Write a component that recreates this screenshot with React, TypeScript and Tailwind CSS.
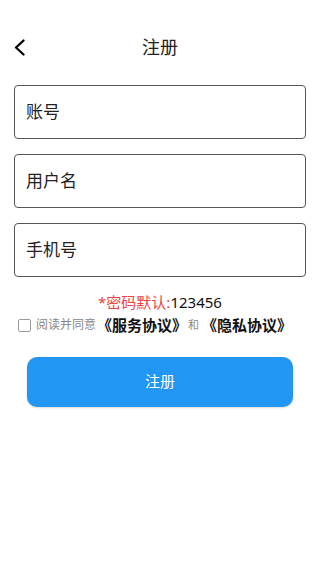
const fields = ["账号", "用户名", "手机号"]

export default function App() {
    return (
        <div className="min-h-[568px] w-[320px] bg-white font-['Noto_Sans','Noto_Sans_CJK_SC',sans-serif] text-[#222]">
            {/* Header */}
            <div className="relative flex h-[60px] items-end justify-center pb-[0px]">
                <button className="absolute left-[13px] top-[39px] text-black">
                    <svg width="13" height="17" viewBox="0 0 13 17" fill="none">
                        <path d="M10.5 1.5 L3 8.5 L10.5 15.5" stroke="currentColor" strokeWidth="2.3" strokeLinecap="round" strokeLinejoin="round" />
                    </svg>
                </button>
                <h1 className="text-[18px] leading-[26px]">注册</h1>
            </div>

            {/* Inputs */}
            <div className="mt-[25px] flex flex-col gap-[15px] px-[14px]">
                {fields.map((f) => (
                    <div
                        key={f}
                        className="flex h-[54px] items-center rounded-[4px] border border-[#555] px-[11px] text-[17px] text-[#222]"
                    >
                        {f}
                    </div>
                ))}
            </div>

            {/* Default password */}
            <p className="mt-[15px] text-center text-[15px] leading-[21px]">
                <span className="text-[#ef4444]">*密码默认:</span>
                <span className="text-[#111]">123456</span>
            </p>

            {/* Agreement */}
            <div className="mt-[1px] flex items-center pl-[18px]">
                <span className="h-[13px] w-[13px] rounded-[2px] border border-[#9a9a9a]" />
                <span className="ml-[5px] text-[12px] text-[#888]">阅读并同意</span>
                <span className="ml-[1px] text-[15px] font-bold text-[#111]">《服务协议》</span>
                <span className="ml-[1px] text-[11px] text-[#888]">和</span>
                <span className="ml-[3px] text-[15px] font-bold text-[#111]">《隐私协议》</span>
            </div>

            {/* Submit */}
            <div className="mt-[20px] px-[27px]">
                <button className="flex h-[50px] w-full items-center justify-center rounded-[10px] bg-[#2196f3] text-[15px] text-white shadow-[0_1px_2px_rgba(0,0,0,0.15)]">
                    注册
                </button>
            </div>
        </div>
    )
}
